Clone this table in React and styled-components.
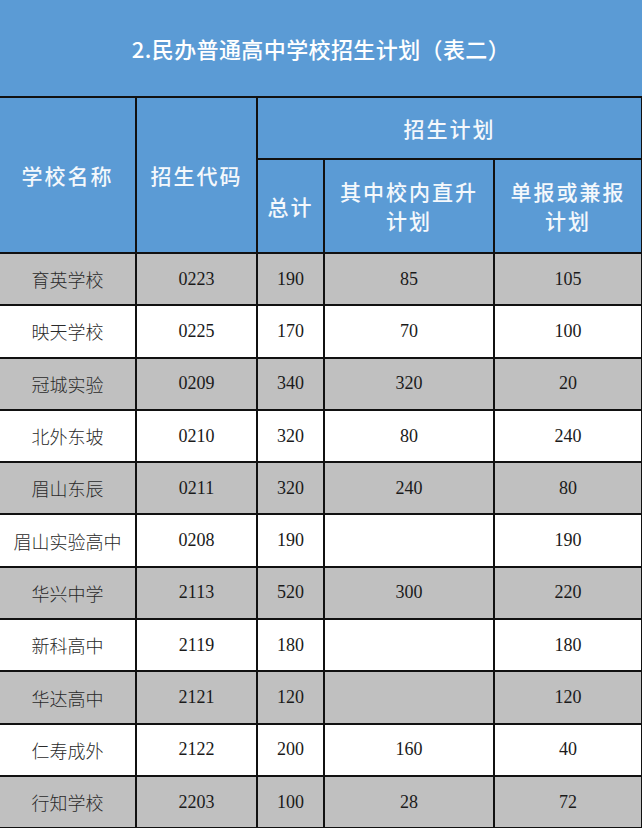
import styled, { createGlobalStyle } from "styled-components";

const GlobalStyle = createGlobalStyle`
  html, body {
    margin: 0;
    padding: 0;
    background: #ffffff;
  }
`;

const rows = [
  ["育英学校", "0223", "190", "85", "105"],
  ["映天学校", "0225", "170", "70", "100"],
  ["冠城实验", "0209", "340", "320", "20"],
  ["北外东坡", "0210", "320", "80", "240"],
  ["眉山东辰", "0211", "320", "240", "80"],
  ["眉山实验高中", "0208", "190", "", "190"],
  ["华兴中学", "2113", "520", "300", "220"],
  ["新科高中", "2119", "180", "", "180"],
  ["华达高中", "2121", "120", "", "120"],
  ["仁寿成外", "2122", "200", "160", "40"],
  ["行知学校", "2203", "100", "28", "72"],
];

export default function App() {
  return (
    <>
      <GlobalStyle />
      <Table>
        <colgroup>
          <col style={{ width: 136 }} />
          <col style={{ width: 121 }} />
          <col style={{ width: 67 }} />
          <col style={{ width: 170 }} />
          <col style={{ width: 148 }} />
        </colgroup>
        <thead>
          <tr>
            <Title colSpan={5}>2.民办普通高中学校招生计划（表二）</Title>
          </tr>
          <HeadRow $h={62}>
            <Head rowSpan={2} $first>
              学校名称
            </Head>
            <Head rowSpan={2}>招生代码</Head>
            <Head colSpan={3}>招生计划</Head>
          </HeadRow>
          <HeadRow $h={94}>
            <Head>总计</Head>
            <Head>
              其中校内直升
              <br />
              计划
            </Head>
            <Head>
              单报或兼报
              <br />
              计划
            </Head>
          </HeadRow>
        </thead>
        <tbody>
          {rows.map((r, i) => (
            <BodyRow key={r[0]} $gray={i % 2 === 0}>
              <NameCell>{r[0]}</NameCell>
              <NumCell>{r[1]}</NumCell>
              <NumCell>{r[2]}</NumCell>
              <NumCell>{r[3]}</NumCell>
              <NumCell>{r[4]}</NumCell>
            </BodyRow>
          ))}
        </tbody>
      </Table>
    </>
  );
}

const Table = styled.table`
  width: 642px;
  table-layout: fixed;
  border-collapse: collapse;
  border-spacing: 0;
  background: #5b9bd5;
`;

const Title = styled.th`
  height: 96px;
  padding: 0;
  background: #5b9bd5;
  color: #ffffff;
  font-family: "Noto Sans CJK SC", "Noto Sans", sans-serif;
  font-weight: 500;
  font-size: 22px;
  letter-spacing: 0.4px;
  text-align: center;
  vertical-align: middle;
  border-bottom: 2px solid #111;
`;

const HeadRow = styled.tr`
  height: ${(p) => p.$h}px;
`;

const Head = styled.th`
  padding: 0;
  background: #5b9bd5;
  color: #f4f8fc;
  font-family: "Noto Sans CJK SC", "Noto Sans", sans-serif;
  font-weight: 500;
  font-size: 21px;
  line-height: 29px;
  letter-spacing: 2px;
  text-align: center;
  vertical-align: middle;
  border: 2px solid #111;
  border-left: ${(p) => (p.$first ? "none" : "2px solid #111")};
`;

const BodyRow = styled.tr`
  height: 52.3px;
  background: ${(p) => (p.$gray ? "#c0c0c0" : "#ffffff")};
`;

const NameCell = styled.td`
  padding: 0;
  border: 2px solid #111;
  border-left: none;
  text-align: center;
  vertical-align: middle;
  color: #2a2a2a;
  font-family: "Noto Sans CJK SC", sans-serif;
  font-weight: 300;
  font-size: 18px;
`;

const NumCell = styled.td`
  padding: 0;
  border: 2px solid #111;
  text-align: center;
  vertical-align: middle;
  color: #1a1a1a;
  font-family: "Liberation Serif", serif;
  font-size: 18px;
`;
